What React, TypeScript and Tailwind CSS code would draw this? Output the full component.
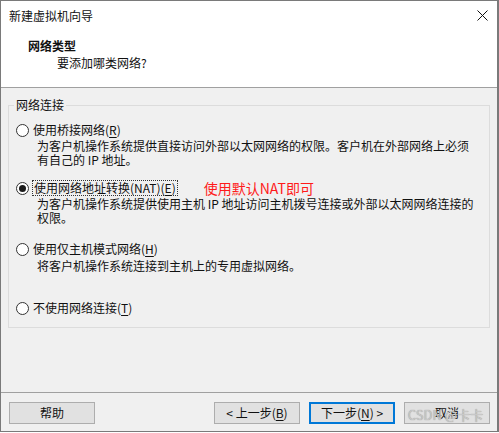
import React from "react";

const font = { fontFamily: '"Noto Sans CJK SC", "Noto Sans", sans-serif' };

function Radio({ checked }: { checked?: boolean }) {
  return (
    <span className="w-[13px] h-[13px] rounded-full border border-[#333333] bg-white flex items-center justify-center shrink-0">
      {checked && <span className="w-[7px] h-[7px] rounded-full bg-[#1a1a1a]" />}
    </span>
  );
}

function U({ children }: { children: React.ReactNode }) {
  return <span className="underline underline-offset-2">{children}</span>;
}

function Btn({ children, primary }: { children: React.ReactNode; primary?: boolean }) {
  return (
    <div
      className={
        "w-[86px] h-[22px] bg-[#e1e1e1] flex items-center justify-center text-[12px] text-[#111] " +
        (primary ? "border-2 border-[#0078d7]" : "border border-[#adadad]")
      }
    >
      {children}
    </div>
  );
}

export default function App() {
  return (
    <div
      className="relative w-[499px] h-[432px] border border-r-2 border-[#7a7a7a] flex flex-col text-[12px] text-[#111] leading-[14px]"
      style={font}
    >
      {/* header */}
      <div className="bg-white h-[86px] flex flex-col">
        <div className="h-[29px] flex items-center justify-between pl-[8px] pr-[9px]">
          <span className="text-[12px]">新建虚拟机向导</span>
          <svg width="11" height="11" viewBox="0 0 11 11">
            <path d="M0.5 0.5 L10.5 10.5 M10.5 0.5 L0.5 10.5" stroke="#111" strokeWidth="1" />
          </svg>
        </div>
        <div className="mt-[9px] pl-[27px] font-bold">网络类型</div>
        <div className="mt-[3px] pl-[56px]">要添加哪类网络?</div>
      </div>
      <div className="h-px bg-[#a0a0a0]" />
      {/* body */}
      <div className="flex-1 bg-[#f0f0f0] flex flex-col">
        <fieldset className="mt-[10px] ml-[7px] w-[482px] h-[230px] border border-[#dcdcdc]">
          <legend className="ml-[5px] px-[2px] leading-[14px]">网络连接</legend>
          <div className="pl-[7px] flex flex-col">
            <div className="mt-[10px] h-[16px] flex items-center">
              <Radio />
              <span className="ml-[3px] px-px">
                使用桥接网络(<U>R</U>)
              </span>
            </div>
            <div className="mt-[1px] pl-[21px] leading-[14px]">
              <div>为客户机操作系统提供直接访问外部以太网网络的权限。客户机在外部网络上必须</div>
              <div>有自己的 IP 地址。</div>
            </div>

            <div className="mt-[13px] h-[16px] flex items-center">
              <Radio checked />
              <span className="ml-[3px] px-px border border-dotted border-[#333]">
                使用网络地址转换(NAT)(<U>E</U>)
              </span>
              <span className="ml-[26px] text-[14px] text-[#ff1a1a]">使用默认NAT即可</span>
            </div>
            <div className="mt-[1px] pl-[21px] leading-[14px]">
              <div>为客户机操作系统提供使用主机 IP 地址访问主机拨号连接或外部以太网网络连接的</div>
              <div>权限。</div>
            </div>

            <div className="mt-[16px] h-[16px] flex items-center">
              <Radio />
              <span className="ml-[3px] px-px">
                使用仅主机模式网络(<U>H</U>)
              </span>
            </div>
            <div className="mt-[2px] pl-[21px] leading-[14px]">
              <div>将客户机操作系统连接到主机上的专用虚拟网络。</div>
            </div>

            <div className="mt-[27px] h-[16px] flex items-center">
              <Radio />
              <span className="ml-[3px] px-px">
                不使用网络连接(<U>T</U>)
              </span>
            </div>
          </div>
        </fieldset>
        <div className="flex-1" />
        <div className="h-px bg-[#a0a0a0]" />
        <div className="h-[38px] pt-[9px] pl-[8px] pr-[7px] flex items-start">
          <Btn>帮助</Btn>
          <div className="flex-1" />
          <div className="flex gap-[9px]">
            <Btn>&lt; 上一步(<U>B</U>)</Btn>
            <Btn primary>下一步(<U>N</U>) &gt;</Btn>
            <Btn>取消</Btn>
          </div>
        </div>
      </div>
      <div
        className="absolute right-[14px] bottom-[9px] text-[13px] text-[#c8c8c8] pointer-events-none"
        style={{ ...font, textShadow: "0 0 1px #888" }}
      >
        CSDN @卡卡
      </div>
    </div>
  );
}
